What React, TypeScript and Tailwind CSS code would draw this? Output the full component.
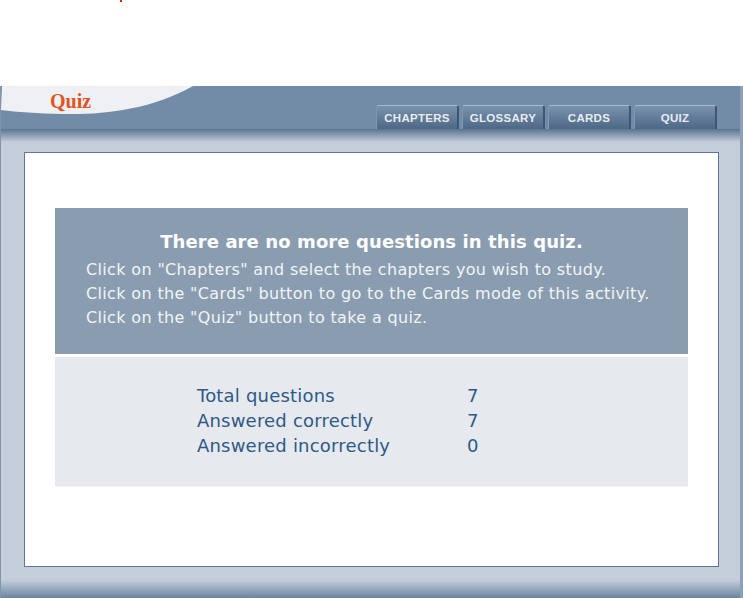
const tabs = ['CHAPTERS', 'GLOSSARY', 'CARDS', 'QUIZ'];

const stats = [
  { label: 'Total questions', value: '7' },
  { label: 'Answered correctly', value: '7' },
  { label: 'Answered incorrectly', value: '0' },
];

const messages = [
  'Click on "Chapters" and select the chapters you wish to study.',
  'Click on the "Cards" button to go to the Cards mode of this activity.',
  'Click on the "Quiz" button to take a quiz.',
];

export default function App() {
  return (
    <div className="relative h-[598px] w-[743px] overflow-hidden bg-white font-['DejaVu_Sans',sans-serif]">
      {/* stray marker at the very top */}
      <div className="relative h-[86px]">
        <span className="absolute left-[120px] top-0 h-[2px] w-[2px] bg-[#ff1a1a]" />
      </div>

      <div className="flex h-[512px] flex-col border-l border-r-[3px] border-l-[#8395ad] border-r-[#8ca0b6]">
        {/* header band */}
        <header className="relative flex h-[43px] items-end justify-between bg-[#728ba6] pr-[23px]">
          <svg className="absolute left-0 top-0" width="200" height="30" viewBox="0 0 200 30">
            <path d="M1 0 H192 C150 24 100 29 62 28 C36 27.5 16 26 0 24 Z" fill="#eff0f4" />
          </svg>
          <span className="relative mb-[18px] ml-[49px] font-['Liberation_Serif',serif] text-[20px] font-bold leading-none text-[#e2541f]">
            Quiz
          </span>
          <nav className="relative flex gap-[3px]">
            {tabs.map((t) => (
              <div
                key={t}
                className="flex h-[24px] w-[83px] items-center justify-center rounded-t-[3px] border-t border-l border-r-2 border-t-[#a9b9ca] border-l-[#7f96b0] border-r-[#3f5672] bg-gradient-to-b from-[#7a92ad] to-[#4d6886] pt-[2px] font-['Liberation_Sans',sans-serif] text-[11.5px] font-bold tracking-[0.3px] text-[#e8ecf2]"
              >
                {t}
              </div>
            ))}
          </nav>
        </header>

        <div className="h-[13px] bg-gradient-to-b from-[#5b7391] to-[#c4ceda]" />

        <div className="flex-1 bg-[#c4ceda] pb-[13px] pl-[23px] pr-[21px] pt-[10px]">
          <div className="h-full border border-[#5f7594] bg-white px-[30px] pt-[55px]">
            <section className="bg-[#8a9db0] pb-[24px] pt-[22px] text-white">
              <h2 className="text-center text-[18px] font-bold leading-[24px] tracking-[0.1px]">
                There are no more questions in this quiz.
              </h2>
              <div className="mt-[4px] pl-[31px] text-[16px] leading-[24px] tracking-[0.35px] text-[#f1f4f7]">
                {messages.map((m) => (
                  <p key={m}>{m}</p>
                ))}
              </div>
            </section>
            <section className="mt-[3px] h-[130px] border-b border-b-[#f0f2f5] bg-[#e6e9ee] pl-[142px] pt-[26px] text-[18px] leading-[25px] tracking-[0.2px] text-[#2e5a87]">
              {stats.map((s) => (
                <div key={s.label} className="flex">
                  <span className="w-[270px]">{s.label}</span>
                  <span>{s.value}</span>
                </div>
              ))}
            </section>
          </div>
        </div>

        <div className="h-[18px] bg-gradient-to-b from-[#c4ceda] to-[#6c849f]" />
      </div>
    </div>
  );
}
